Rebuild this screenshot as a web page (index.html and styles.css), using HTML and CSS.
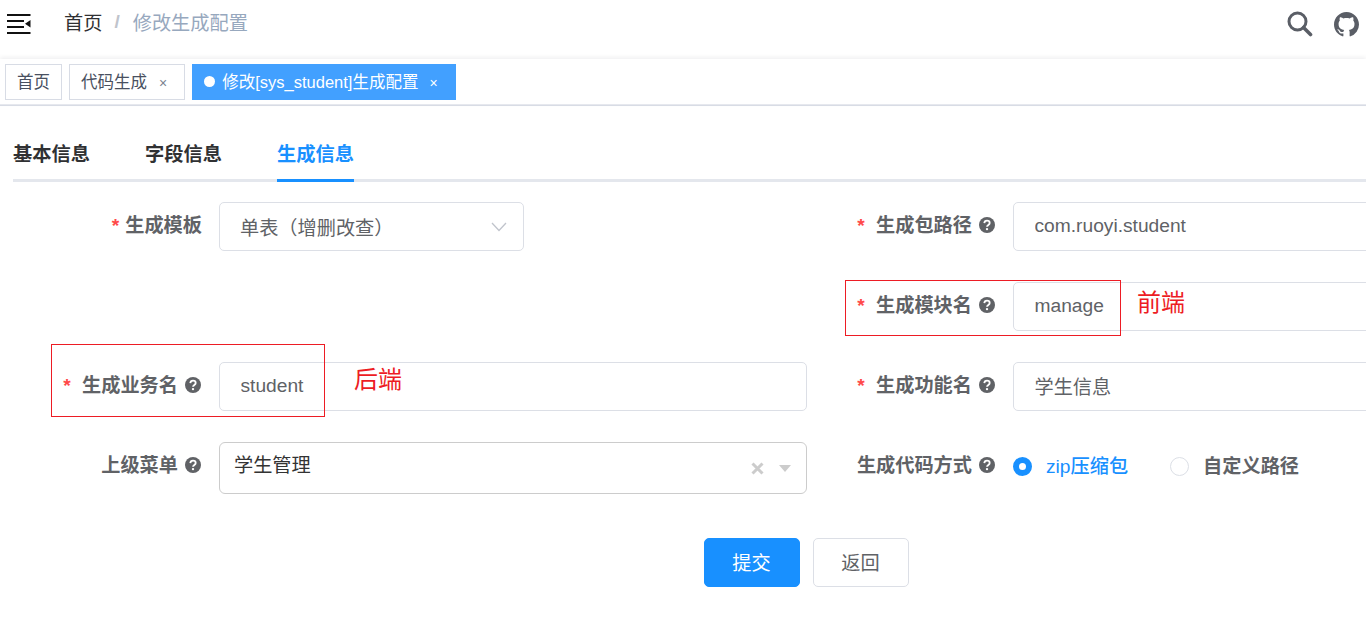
FILE: index.html
```
<!DOCTYPE html>
<html lang="zh-CN">
<head>
<meta charset="utf-8">
<title>修改生成配置</title>
<link rel="stylesheet" href="styles.css">
</head>
<body>
<header class="navbar">
  <svg class="hamburger" viewBox="0 0 24 20" width="24" height="20"><path d="M0 0h23.500v2H0zM0 6h17v2H0zM0 12h17v2H0zM0 18h23.500v2H0z" fill="#111"/><path d="M23.500 6v7.500L18 9.700z" fill="#111"/></svg>
  <nav class="crumbs"><span class="crumb-home">首页</span><span class="crumb-sep">/</span><span class="crumb-now">修改生成配置</span></nav>
  <div class="nav-icons">
    <svg width="26" height="26" viewBox="0 0 26 26"><circle cx="10.500" cy="10.500" r="8.500" fill="none" stroke="#5a5e66" stroke-width="3"/><path d="M16.500 16.500l7 7" stroke="#5a5e66" stroke-width="3.600" stroke-linecap="round"/></svg>
    <svg width="25" height="25" viewBox="0 0 16 16"><path fill="#5a5e66" d="M8 0C3.580 0 0 3.580 0 8c0 3.540 2.290 6.530 5.470 7.590.4.070.55-.17.55-.38 0-.19-.01-.82-.01-1.490-2.010.37-2.530-.49-2.690-.94-.09-.23-.48-.94-.82-1.130-.28-.15-.68-.52-.01-.53.63-.01 1.080.58 1.230.82.720 1.210 1.870.87 2.330.66.070-.52.28-.87.51-1.070-1.780-.2-3.640-.89-3.640-3.950 0-.87.31-1.590.82-2.150-.08-.2-.36-1.020.08-2.120 0 0 .67-.21 2.200.82.64-.18 1.320-.27 2-.27.68 0 1.360.09 2 .27 1.530-1.040 2.200-.82 2.200-.82.44 1.100.16 1.920.08 2.120.51.56.82 1.270.82 2.150 0 3.070-1.870 3.750-3.650 3.950.29.25.54.73.54 1.480 0 1.070-.01 1.930-.01 2.200 0 .21.15.46.55.38A8.013 8.013 0 0016 8c0-4.420-3.580-8-8-8z"/></svg>
  </div>
</header>
<div class="tags">
  <span class="tag">首页</span>
  <span class="tag">代码生成<span class="tag-x">×</span></span>
  <span class="tag tag-on"><i class="tag-dot"></i>修改[sys_student]生成配置<span class="tag-x">×</span></span>
</div>
<main class="content">
  <div class="tabs">
    <span class="tab">基本信息</span>
    <span class="tab">字段信息</span>
    <span class="tab tab-on">生成信息</span>
  </div>
  <form class="form">
    <div class="grid">
      <div class="item">
        <label class="label"><i class="star">*</i>生成模板</label>
        <div class="select">单表（增删改查）<svg class="chev" width="16" height="10" viewBox="0 0 16 10"><path d="M1 1l7 7.500L15 1" fill="none" stroke="#c0c4cc" stroke-width="1.300"/></svg></div>
      </div>
      <div class="item">
        <label class="label"><i class="star">*</i> 生成包路径<svg class="help" viewBox="0 0 16 16"><circle cx="8" cy="8" r="8" fill="#606266"/><path d="M5.300 6.100C5.400 4.500 6.500 3.600 8 3.600s2.700.9 2.700 2.300c0 2-2.700 2-2.700 3.900" fill="none" stroke="#fff" stroke-width="1.800"/><circle cx="8" cy="12.100" r="1.200" fill="#fff"/></svg></label>
        <input class="input" value="com.ruoyi.student" readonly>
      </div>
      <div class="item"></div>
      <div class="item">
        <label class="label"><i class="star">*</i> 生成模块名<svg class="help" viewBox="0 0 16 16"><circle cx="8" cy="8" r="8" fill="#606266"/><path d="M5.300 6.100C5.400 4.500 6.500 3.600 8 3.600s2.700.9 2.700 2.300c0 2-2.700 2-2.700 3.900" fill="none" stroke="#fff" stroke-width="1.800"/><circle cx="8" cy="12.100" r="1.200" fill="#fff"/></svg></label>
        <input class="input" value="manage" readonly>
      </div>
      <div class="item">
        <label class="label"><i class="star">*</i> 生成业务名<svg class="help" viewBox="0 0 16 16"><circle cx="8" cy="8" r="8" fill="#606266"/><path d="M5.300 6.100C5.400 4.500 6.500 3.600 8 3.600s2.700.9 2.700 2.300c0 2-2.700 2-2.700 3.900" fill="none" stroke="#fff" stroke-width="1.800"/><circle cx="8" cy="12.100" r="1.200" fill="#fff"/></svg></label>
        <input class="input" value="student" readonly>
      </div>
      <div class="item">
        <label class="label"><i class="star">*</i> 生成功能名<svg class="help" viewBox="0 0 16 16"><circle cx="8" cy="8" r="8" fill="#606266"/><path d="M5.300 6.100C5.400 4.500 6.500 3.600 8 3.600s2.700.9 2.700 2.300c0 2-2.700 2-2.700 3.900" fill="none" stroke="#fff" stroke-width="1.800"/><circle cx="8" cy="12.100" r="1.200" fill="#fff"/></svg></label>
        <input class="input" value="学生信息" readonly>
      </div>
      <div class="item">
        <label class="label">上级菜单<svg class="help" viewBox="0 0 16 16"><circle cx="8" cy="8" r="8" fill="#606266"/><path d="M5.300 6.100C5.400 4.500 6.500 3.600 8 3.600s2.700.9 2.700 2.300c0 2-2.700 2-2.700 3.900" fill="none" stroke="#fff" stroke-width="1.800"/><circle cx="8" cy="12.100" r="1.200" fill="#fff"/></svg></label>
        <div class="tree">
          <span class="tree-value">学生管理</span>
          <svg class="tree-x" width="13" height="13" viewBox="0 0 13 13"><path d="M1.500 1.500l10 10M11.500 1.500l-10 10" stroke="#ccc" stroke-width="3"/></svg>
          <svg class="tree-caret" width="12" height="7" viewBox="0 0 12 7"><path d="M0 0h12L6 7z" fill="#ccc"/></svg>
        </div>
      </div>
      <div class="item">
        <label class="label">生成代码方式<svg class="help" viewBox="0 0 16 16"><circle cx="8" cy="8" r="8" fill="#606266"/><path d="M5.300 6.100C5.400 4.500 6.500 3.600 8 3.600s2.700.9 2.700 2.300c0 2-2.700 2-2.700 3.900" fill="none" stroke="#fff" stroke-width="1.800"/><circle cx="8" cy="12.100" r="1.200" fill="#fff"/></svg></label>
        <div class="radios">
          <span class="radio radio-on"><i class="radio-mark"></i>zip压缩包</span>
          <span class="radio"><i class="radio-mark"></i>自定义路径</span>
        </div>
      </div>
    </div>
    <div class="actions">
      <button type="button" class="btn btn-primary">提交</button>
      <button type="button" class="btn">返回</button>
    </div>
  </form>
</main>
<div class="mark mark-front"></div>
<div class="mark mark-back"></div>
<span class="mark-text mark-text-front">前端</span>
<span class="mark-text mark-text-back">后端</span>
</body>
</html>
```

FILE: styles.css
```
* { box-sizing: border-box; }
html, body { margin: 0; height: 100%; overflow: hidden; background: #fff; }
body { position: relative; width: 1366px; height: 626px; font-family: "Liberation Sans", "Noto Sans CJK SC", sans-serif; color: #606266; }
i { font-style: normal; }

.navbar { height: 59px; display: flex; align-items: center; padding: 0 7px 12px 7px; }
.hamburger { flex: none; }
.crumbs { margin-left: 33px; margin-bottom: 4px; font-size: 19.200px; display: flex; align-items: center; }
.crumb-home { color: #303133; }
.crumb-sep { color: #c0c4cc; margin: 0 13px 0 12px; font-weight: 700; }
.crumb-now { color: #97a8be; }
.nav-icons { margin-left: auto; display: flex; align-items: center; gap: 21px; margin-top: 1px; }

.tags { height: 47px; display: flex; align-items: flex-start; gap: 7px; padding: 5px 0 0 5px; border-bottom: 1px solid #d8dce5; box-shadow: 0 -2px 4px rgba(0, 21, 41, .06), inset 0 -1px 0 #e6e8ee; }
.tag { height: 36px; display: inline-flex; align-items: center; padding: 0 11px 2px; border: 1px solid #d8dce5; background: #fff; color: #495060; font-size: 16.500px; }
.tag-x { font-size: 14px; margin: 3px 6px 0 12px; color: #7b8290; }
.tag-on { background: #42a0ff; border-color: #42a0ff; color: #fff; }
.tag-on .tag-x { color: #fff; margin-right: 6px; margin-left: 11px; }
.tag-dot { width: 11px; height: 11px; border-radius: 50%; background: #fff; margin-right: 7px; }

.content { padding-left: 13px; }
.tabs { height: 76px; display: flex; align-items: flex-end; gap: 55px; border-bottom: 3px solid #e4e7ed; margin-bottom: 20px; }
.tab { height: 48px; margin-bottom: -3px; padding-top: 6px; border-bottom: 3px solid transparent; font-size: 19.250px; font-weight: 700; color: #303133; line-height: 30px; }
.tab-on { color: #1890ff; border-bottom-color: #1890ff; }

.form { width: 1586px; }
.grid { display: grid; grid-template-columns: 794px 794px; row-gap: 31px; grid-template-rows: 49px 49px 49px 52px; }
.item { display: flex; align-items: flex-start; }
.label { flex: none; width: 206px; padding-right: 17px; text-align: right; font-size: 19.200px; font-weight: 700; line-height: 48px; color: #606266; white-space: nowrap; }
.star { color: #ff4949; font-weight: 700; margin-right: 6px; }
.help { display: inline-block; width: 16px; height: 16px; margin: 0 1px 0 7px; vertical-align: -1px; }

.input { width: 588px; height: 49px; border: 1px solid #dcdfe6; border-radius: 5px; padding: 0 20.500px 2px; font: 19.200px "Liberation Sans", "Noto Sans CJK SC", sans-serif; color: #606266; background: #fff; outline: none; }
.select { width: 305px; height: 49px; border: 1px solid #dcdfe6; border-radius: 5px; padding: 0 16px 0 20px; display: flex; align-items: center; justify-content: space-between; font-size: 19.200px; color: #606266; }
.chev { flex: none; }
.tree { width: 588px; height: 52px; border: 1px solid #ccc; border-radius: 6px; padding: 0 15px 0 14px; display: flex; align-items: center; }
.tree-value { font-size: 19.200px; color: #333; margin-bottom: 9px; }
.tree-x { margin-left: auto; }
.tree-caret { margin-left: 15px; }

.radios { display: flex; align-items: center; gap: 42px; height: 46px; font-size: 19.200px; font-weight: 700; }
.radio { display: inline-flex; align-items: center; color: #606266; }
.radio-mark { width: 19px; height: 19px; margin-top: 2px; border-radius: 50%; border: 1px solid #dcdfe6; margin-right: 14px; background: #fff; }
.radio-on { color: #1890ff; font-weight: 500; }
.radio-on .radio-mark { border: 6.500px solid #1890ff; margin-right: 14px; }

.actions { display: flex; justify-content: center; gap: 13px; margin-top: 44px; }
.btn { width: 96px; height: 49px; border: 1px solid #dcdfe6; border-radius: 5px; background: #fff; font: 19.200px "Liberation Sans", "Noto Sans CJK SC", sans-serif; color: #606266; padding: 0 0 2px; }
.btn-primary { background: #1890ff; border-color: #1890ff; color: #fff; }

.mark { position: absolute; border: 1px solid #ed1c24; }
.mark-front { left: 845px; top: 280px; width: 276px; height: 56px; }
.mark-back { left: 51px; top: 344px; width: 274px; height: 73px; }
.mark-text { position: absolute; font-size: 24px; line-height: 32px; color: #ed1c24; }
.mark-text-front { left: 1137px; top: 287px; }
.mark-text-back { left: 354px; top: 364px; }
```
